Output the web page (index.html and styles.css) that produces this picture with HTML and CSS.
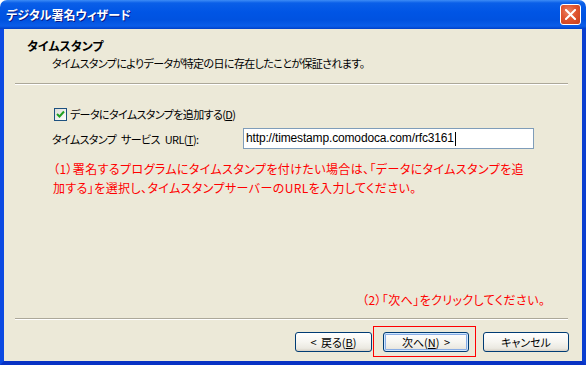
FILE: index.html
```html
<!DOCTYPE html>
<html lang="ja">
<head>
    <meta charset="UTF-8">
    <title>デジタル署名ウィザード</title>
    <link rel="stylesheet" href="styles.css">
</head>
<body>
    <div class="window">
        <div class="titlebar">
            <span class="title">デジタル署名ウィザード</span>
            <span class="close-btn">
                <svg width="11" height="11" viewBox="0 0 11 11"><path d="M1 1 L10 10 M10 1 L1 10" stroke="#fff" stroke-width="2" stroke-linecap="square"/></svg>
            </span>
        </div>
        <div class="frame">
            <div class="client">
                <div class="header">
                    <h1>タイムスタンプ</h1>
                    <p>タイムスタンプによりデータが特定の日に存在したことが保証されます。</p>
                </div>
                <div class="sep sep-top"></div>
                <div class="content">
                    <label class="check">
                        <span class="box">
                            <svg width="11" height="11" viewBox="0 0 11 11"><path d="M2 5 L4.5 7.5 L9 2.5" fill="none" stroke="#21a121" stroke-width="2"/></svg>
                        </span>
                        データにタイムスタンプを追加する(<u>D</u>)
                    </label>
                    <div class="url-row">
                        <span class="url-label">タイムスタンプ サービス URL(<u>T</u>):</span>
                        <div class="textbox">http://timestamp.comodoca.com/rfc3161<span class="caret"></span></div>
                    </div>
                    <p class="note">（1）署名するプログラムにタイムスタンプを付けたい場合は、「データにタイムスタンプを追<br>加する」を選択し、タイムスタンプサーバーのURLを入力してください。</p>
                </div>
                <p class="note note-next">（2）「次へ」をクリックしてください。</p>
                <div class="sep"></div>
                <div class="buttons">
                    <button class="btn btn-back">&lt; 戻る(<u>B</u>)</button>
                    <span class="next-wrap">
                        <button class="btn btn-next">次へ(<u>N</u>) &gt;</button>
                        <span class="mark"></span>
                    </span>
                    <button class="btn btn-cancel">キャンセル</button>
                </div>
            </div>
        </div>
    </div>
</body>
</html>
```

FILE: styles.css
```css
body {
    margin: 0;
    font-family: "Noto Sans CJK JP", sans-serif;
    font-size: 11px;
    letter-spacing: -0.6px;
    font-feature-settings: "palt";
    color: #000;
    background: #fff;
}
.window {
    width: 586px;
    height: 365px;
    display: flex;
    flex-direction: column;
}
.titlebar {
    height: 29px;
    box-sizing: border-box;
    display: flex;
    align-items: center;
    justify-content: space-between;
    padding: 0 5px 0 6px;
    border-radius: 7px 7px 0 0;
    background: linear-gradient(#3d8cf6 0, #0a5fe8 3px, #0055e5 12px, #0052e0 20px, #0a5de9 26px, #0040c8 29px);
}
.title {
    color: #fff;
    font-weight: bold;
    font-size: 12px;
    letter-spacing: 0;
    text-shadow: 1px 1px 0 #0a1883;
}
.close-btn {
    width: 21px;
    height: 21px;
    box-sizing: border-box;
    border: 1px solid #fff;
    border-radius: 3px;
    background: radial-gradient(circle at 40% 35%, #e98466 0, #e0542f 45%, #c63d1a 100%);
    display: flex;
    align-items: center;
    justify-content: center;
}
.frame {
    flex: 1;
    display: flex;
    border-style: solid;
    border-width: 0 4px 4px 4px;
    border-color: #0844d8 #0a3ed0 #0832c4 #0b4ae2;
}
.client {
    flex: 1;
    display: flex;
    flex-direction: column;
    background: #ece9d8;
}
.header {
    padding: 10px 0 0 23px;
}
.header h1 {
    margin: 0;
    font-size: 12px;
    letter-spacing: 0;
    line-height: 14px;
    font-weight: bold;
}
.header p {
    margin: 3px 0 0 25px;
    line-height: 14px;
}
.sep {
    margin: 0 14px 0 11px;
    border-top: 1px solid #aca899;
    border-bottom: 1px solid #fff;
}
.sep-top {
    margin-top: 13px;
}
.content {
    padding: 22px 0 0 48px;
}
.check {
    display: flex;
    align-items: center;
    height: 14px;
    line-height: 14px;
    margin-left: 2px;
}
.box {
    width: 13px;
    height: 13px;
    box-sizing: border-box;
    border: 1px solid #1c5180;
    background: linear-gradient(135deg, #dcdcd6, #fff);
    display: flex;
    align-items: center;
    justify-content: center;
    margin-right: 3px;
}
.url-row {
    display: flex;
    align-items: center;
    margin-top: 7px;
}
.url-label {
    width: 191px;
    word-spacing: 3px;
}
.textbox {
    width: 291px;
    height: 21px;
    box-sizing: border-box;
    border: 1px solid #7f9db9;
    background: #fff;
    padding-left: 2px;
    font-family: "Liberation Sans", sans-serif;
    font-size: 12px;
    letter-spacing: -0.15px;
    line-height: 19px;
    display: flex;
    align-items: center;
}
.caret {
    width: 1px;
    height: 14px;
    background: #000;
    margin-left: 1px;
}
.note {
    margin: 10px 0 0 1px;
    color: #ff0000;
    line-height: 19px;
    font-size: 12px;
    letter-spacing: 0.4px;
}
.note-next {
    margin: auto 0 11px 358px;
    line-height: 14px;
    letter-spacing: 0.4px;
}
.buttons {
    display: flex;
    justify-content: flex-end;
    align-items: center;
    padding: 12px 13px 9px 0;
}
.btn {
    height: 20px;
    box-sizing: border-box;
    border: 1px solid #003c74;
    border-radius: 3px;
    background: linear-gradient(#ffffff 0, #f6f5f0 50%, #ebe9e1 85%, #d6d0c5 100%);
    font-family: inherit;
    font-size: 11px;
    letter-spacing: 0;
    word-spacing: 2px;
    font-feature-settings: "palt";
    padding: 0;
    color: #000;
}
.btn-back {
    width: 77px;
}
.next-wrap {
    position: relative;
    margin-left: 11px;
    display: flex;
}
.btn-next {
    width: 86px;
    box-shadow: inset 0 0 0 1px #cee7ff, inset 0 0 0 2px #89ade4;
}
.mark {
    position: absolute;
    left: -10px;
    top: -6px;
    width: 103px;
    height: 31px;
    box-sizing: border-box;
    border: 1px solid #ff0000;
}
.btn-cancel {
    width: 86px;
    margin-left: 14px;
}
```
